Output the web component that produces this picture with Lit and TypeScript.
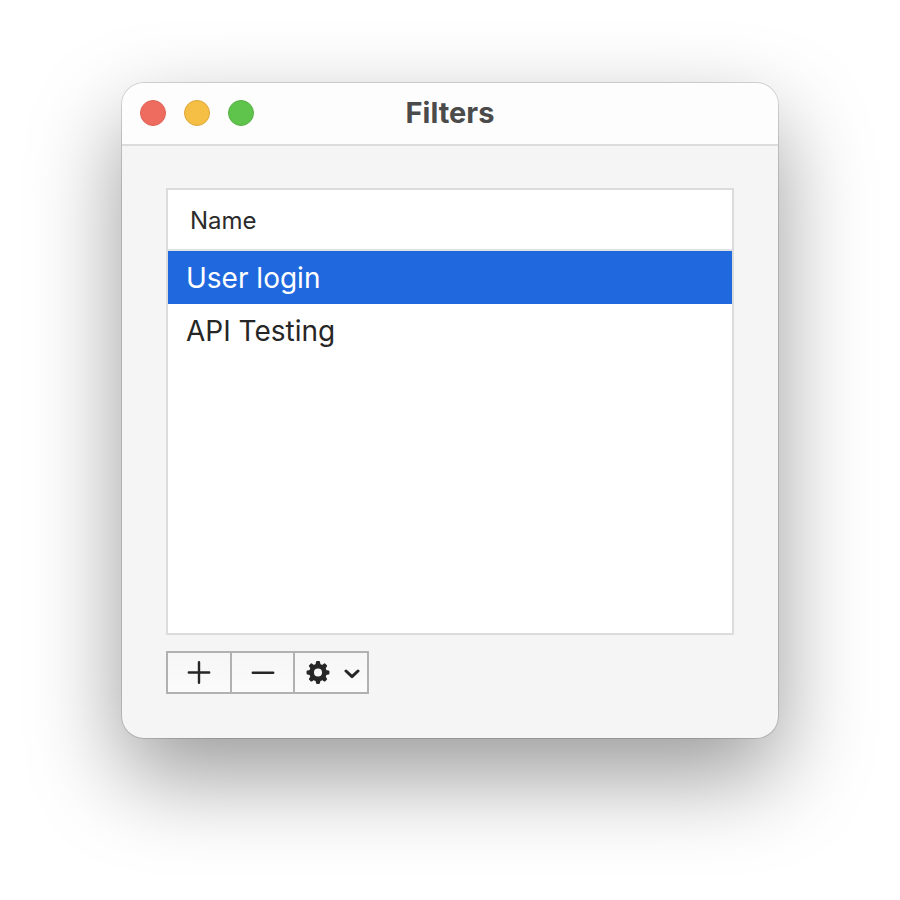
import { LitElement, html, css, svg } from "lit";
import { customElement, state } from "lit/decorators.js";

const TEETH = [0, 45, 90, 135, 180, 225, 270, 315];

@customElement("filter-table")
class FilterTable extends LitElement {
  static styles = css`
    :host {
      display: block;
      box-sizing: border-box;
      min-height: 447px;
      border: 2px solid #dcdcdc;
      background: #fff;
    }
    table {
      width: 100%;
      border-collapse: separate;
      border-spacing: 0;
      table-layout: fixed;
    }
    th {
      height: 57px;
      padding: 2px 22px 0;
      border-bottom: 2px solid #dfe3e8;
      font-size: 24px;
      font-weight: 400;
      text-align: left;
      color: #2b2b2b;
    }
    td {
      height: 53px;
      padding: 0 18px;
      font-size: 28px;
      line-height: 32px;
      color: #262626;
      cursor: default;
    }
    .selected td {
      background: #1f68de;
      color: #fff;
    }
  `;

  @state() private names = ["User login", "API Testing"];
  @state() private selected = 0;

  render() {
    return html`
      <table>
        <thead>
          <tr><th scope="col">Name</th></tr>
        </thead>
        <tbody>
          ${this.names.map(
            (name, i) => html`
              <tr
                class=${i === this.selected ? "selected" : ""}
                @click=${() => (this.selected = i)}
              >
                <td>${name}</td>
              </tr>
            `
          )}
        </tbody>
      </table>
    `;
  }
}

@customElement("app-root")
class AppRoot extends LitElement {
  static styles = css`
    :host {
      display: block;
      box-sizing: border-box;
      min-height: 100vh;
      padding: 83px 122px 120px;
      overflow: hidden;
      background: #fff;
      font-family: Inter, "Liberation Sans", sans-serif;
    }
    .window {
      border-radius: 22px;
      background: #f5f5f5;
      box-shadow: 0 0 0 1px rgba(0, 0, 0, 0.14), 0 38px 92px rgba(0, 0, 0, 0.4);
    }
    .titlebar {
      display: grid;
      grid-template-columns: 1fr auto 1fr;
      align-items: center;
      box-sizing: border-box;
      height: 63px;
      padding: 0 18px 1px;
      border-bottom: 2px solid #dcdcdc;
      border-radius: 22px 22px 0 0;
      background: #fdfdfd;
    }
    .lights {
      display: flex;
      gap: 18px;
    }
    .light {
      width: 26px;
      height: 26px;
      padding: 0;
      border: 1px solid #dd6154;
      border-radius: 50%;
      background: #ee6b5f;
    }
    .light.minimize {
      border-color: #dea73a;
      background: #f5be45;
    }
    .light.zoom {
      border-color: #55b043;
      background: #5fc44c;
    }
    h1 {
      margin: 0;
      font-size: 29px;
      line-height: 32px;
      font-weight: 700;
      color: #4b4b4b;
    }
    .content {
      padding: 42px 44px 44px;
    }
    .actions {
      display: inline-flex;
      margin-top: 16px;
      border: 2px solid #b1b1b1;
      vertical-align: top;
    }
    .actions button {
      display: flex;
      align-items: center;
      justify-content: center;
      width: 62px;
      height: 39px;
      padding: 0;
      border: 0;
      background: linear-gradient(#f6f6f6, #fbfbfb);
      color: #262626;
    }
    .actions button + button {
      box-sizing: content-box;
      width: 61px;
      border-left: 2px solid #b1b1b1;
    }
    .actions button.menu {
      width: 68px;
      padding-left: 4px;
      gap: 14px;
    }
    svg {
      display: block;
      fill: none;
      stroke: currentColor;
      stroke-linecap: round;
      stroke-linejoin: round;
    }
  `;

  render() {
    return html`
      <main class="window">
        <header class="titlebar">
          <div class="lights">
            <button class="light close" aria-label="Close"></button>
            <button class="light minimize" aria-label="Minimize"></button>
            <button class="light zoom" aria-label="Zoom"></button>
          </div>
          <h1>Filters</h1>
        </header>
        <section class="content">
          <filter-table></filter-table>
          <div class="actions">
            <button aria-label="Add filter">
              <svg width="24" height="24" stroke-width="2.4">
                <path d="M1.8 11.5H22.2M12 1.3V21.7" />
              </svg>
            </button>
            <button aria-label="Remove filter">
              <svg width="24" height="24" stroke-width="2.4">
                <path d="M1.8 11.7H22.2" />
              </svg>
            </button>
            <button class="menu" aria-label="Filter actions">
              <svg width="24" height="24" viewBox="0.4 0.9 23.2 23.2">
                <circle cx="12" cy="12" r="6.2" stroke-width="4.6" />
                ${TEETH.map(
                  (a) => svg`<path
                    d="M10.5 4.6L11 1.9H13L13.5 4.6Z"
                    fill="currentColor"
                    stroke-width="1.9"
                    transform="rotate(${a} 12 12)"
                  />`
                )}
              </svg>
              <svg width="16" height="24" stroke-width="3">
                <path d="M2 10L8 15.6L14 10" />
              </svg>
            </button>
          </div>
        </section>
      </main>
    `;
  }
}
